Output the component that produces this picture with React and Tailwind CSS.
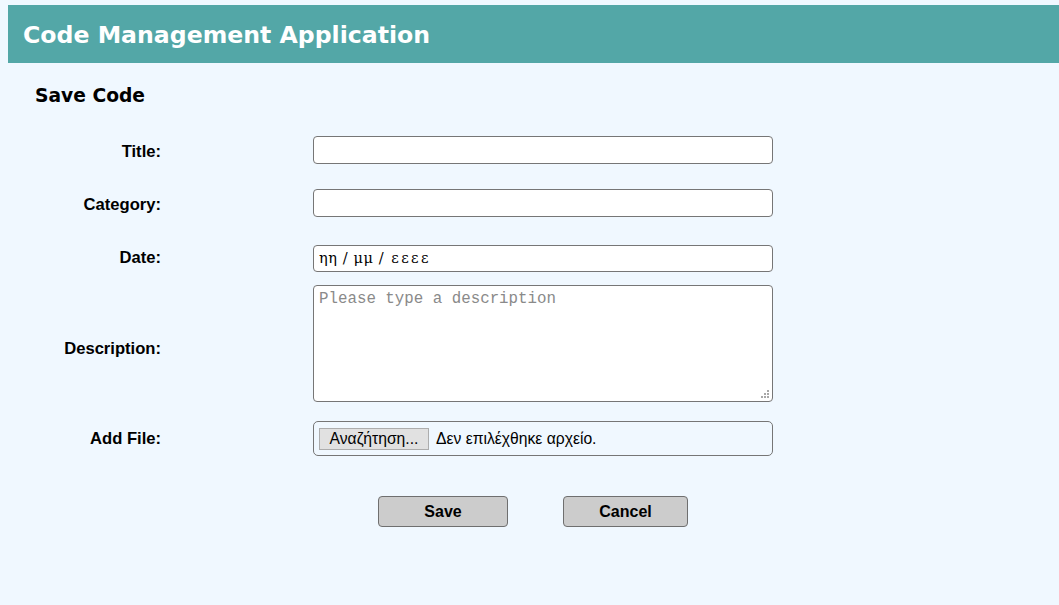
const sans = { fontFamily: '"DejaVu Sans", Verdana, sans-serif' };

function Row({ label, labelShift = '', className = '', children }) {
  return (
    <div className={`flex items-center ${className}`}>
      <label
        className={`w-[161px] shrink-0 text-right font-['Liberation_Sans',Arial,sans-serif] text-[16.6px] font-bold text-black ${labelShift}`}
      >
        {label}
      </label>
      <div className="relative ml-[152px] h-full w-[460px]">{children}</div>
    </div>
  );
}

function Grip() {
  const dots = [
    [6, 0],
    [3, 3],
    [6, 3],
    [0, 6],
    [3, 6],
    [6, 6],
  ];
  return (
    <div className="pointer-events-none absolute bottom-[4px] right-[4px] h-[8px] w-[8px]">
      {dots.map(([x, y]) => (
        <span
          key={`${x}-${y}`}
          className="absolute h-[2px] w-[2px] bg-[#a8a8a8]"
          style={{ left: x, top: y }}
        />
      ))}
    </div>
  );
}

export default function App() {
  return (
    <div className="min-h-[605px] bg-[#f0f8ff] pt-[5px] text-black">
      <header className="ml-[8px] flex h-[58px] items-center bg-[#53a7a7] pl-[15px] pt-[3px]">
        <h1 className="text-[23.6px] font-bold leading-none text-white" style={sans}>
          Code Management Application
        </h1>
      </header>

      <h3 className="ml-[35px] mt-[22px] text-[18.7px] font-bold leading-[22px]" style={sans}>
        Save Code
      </h3>

      <form className="flex flex-col" onSubmit={(e) => e.preventDefault()}>
        <Row label="Title:" labelShift="mt-[4px]" className="mt-[29px] h-[28px]">
          <input
            type="text"
            className="h-full w-full rounded-[4px] border border-[#767676] bg-white px-[5px] outline-none"
          />
        </Row>

        <Row label="Category:" labelShift="mt-[4px]" className="mt-[25px] h-[28px]">
          <input
            type="text"
            className="h-full w-full rounded-[4px] border border-[#767676] bg-white px-[5px] outline-none"
          />
        </Row>

        <Row label="Date:" labelShift="mt-[-1px]" className="mt-[28px] h-[27px]">
          <div className="flex h-full w-full items-center rounded-[4px] border border-[#767676] bg-white pl-[5px] font-['DejaVu_Serif','Liberation_Serif',serif] text-[14.5px] text-black">
            <span className="tracking-[0.6px]">ηη / μμ /</span>
            <span className="ml-[7px] tracking-[2.4px]">εεεε</span>
          </div>
        </Row>

        <Row label="Description:" labelShift="mt-[11px]" className="mt-[13px] h-[117px]">
          <textarea
            placeholder="Please type a description"
            className="block h-full w-full resize-none rounded-[4px] border border-[#767676] bg-white px-[5px] py-[3px] font-['Liberation_Mono','Courier_New',monospace] text-[15.8px] leading-[20px] outline-none placeholder:text-[#8a8a8a]"
          />
          <Grip />
        </Row>

        <Row label="Add File:" labelShift="mt-[1px]" className="mt-[19px] h-[35px]">
          <div className="flex h-full w-full items-center rounded-[5px] border border-[#767676] px-[5px] font-['Liberation_Sans',Arial,sans-serif] text-[15.7px]">
            <span className="flex h-[22px] w-[110px] items-center justify-center border border-[#adadad] bg-[#e1e1e1] text-black">
              Αναζήτηση...
            </span>
            <span className="ml-[7px] text-black">Δεν επιλέχθηκε αρχείο.</span>
          </div>
        </Row>

        <div className="mt-[40px] flex h-[31px] font-['Liberation_Sans',Arial,sans-serif] text-[16px] font-bold">
          <button
            type="submit"
            className="ml-[378px] h-full w-[130px] rounded-[4px] border border-[#6f6f6f] bg-[#cccccc] text-black"
          >
            Save
          </button>
          <button
            type="button"
            className="ml-[55px] h-full w-[125px] rounded-[4px] border border-[#6f6f6f] bg-[#cccccc] text-black"
          >
            Cancel
          </button>
        </div>
      </form>
    </div>
  );
}
